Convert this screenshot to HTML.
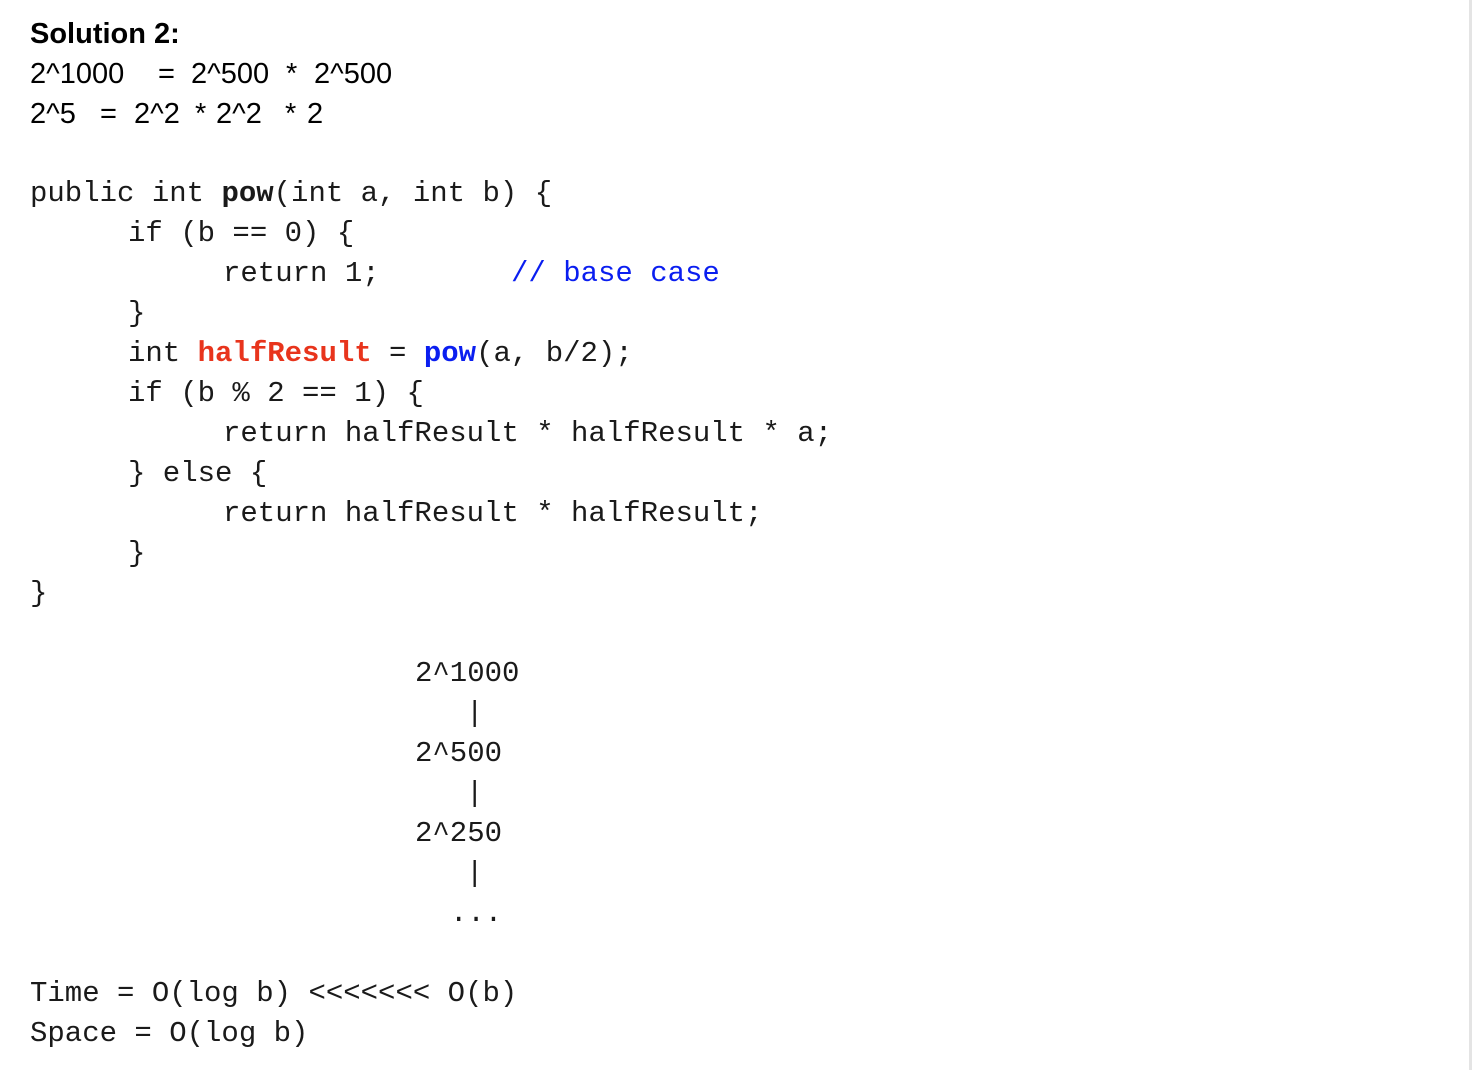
<!DOCTYPE html>
<html><head><meta charset="utf-8"><style>
html,body{margin:0;padding:0;background:#fff;width:1472px;height:1070px;overflow:hidden;position:relative}
.s{position:absolute;font-family:"Liberation Sans",Arial,sans-serif;font-size:29px;line-height:40px;color:#000;white-space:pre}
.m{position:absolute;font-family:"Liberation Mono",monospace;font-size:29px;line-height:40px;color:#1a1a1a;white-space:pre}
b{font-weight:bold}
.r{color:#e8341c;font-weight:bold}
.bl{color:#0a1ef0;font-weight:bold}
.c{color:#0a1ef0}
.edge{position:absolute;left:1469px;top:0;width:3px;height:1070px;background:#e4e4e4}
</style></head><body>
<div class="s" style="left:30px;top:14px;font-weight:bold">Solution 2:</div>
<div class="s" style="left:30px;top:54px">2^1000</div>
<div class="s" style="left:158px;top:54px">=</div>
<div class="s" style="left:191px;top:54px">2^500</div>
<div class="s" style="left:286px;top:54px">*</div>
<div class="s" style="left:314px;top:54px">2^500</div>
<div class="s" style="left:30px;top:94px">2^5</div>
<div class="s" style="left:100px;top:94px">=</div>
<div class="s" style="left:134px;top:94px">2^2</div>
<div class="s" style="left:195px;top:94px">*</div>
<div class="s" style="left:216px;top:94px">2^2</div>
<div class="s" style="left:285px;top:94px">*</div>
<div class="s" style="left:307px;top:94px">2</div>

<div class="m" style="left:30px;top:174px">public int <b>pow</b>(int a, int b) {</div>
<div class="m" style="left:128px;top:214px">if (b == 0) {</div>
<div class="m" style="left:223px;top:254px">return 1;</div>
<div class="m c" style="left:511px;top:254px">// base case</div>
<div class="m" style="left:128px;top:294px">}</div>
<div class="m" style="left:128px;top:334px">int <span class="r">halfResult</span> = <span class="bl">pow</span>(a, b/2);</div>
<div class="m" style="left:128px;top:374px">if (b % 2 == 1) {</div>
<div class="m" style="left:223px;top:414px">return halfResult * halfResult * a;</div>
<div class="m" style="left:128px;top:454px">} else {</div>
<div class="m" style="left:223px;top:494px">return halfResult * halfResult;</div>
<div class="m" style="left:128px;top:534px">}</div>
<div class="m" style="left:30px;top:574px">}</div>

<div class="m" style="left:415px;top:654px">2^1000</div>
<div class="m" style="left:466px;top:694px">|</div>
<div class="m" style="left:415px;top:734px">2^500</div>
<div class="m" style="left:466px;top:774px">|</div>
<div class="m" style="left:415px;top:814px">2^250</div>
<div class="m" style="left:466px;top:854px">|</div>
<div class="m" style="left:450px;top:894px">...</div>

<div class="m" style="left:30px;top:974px">Time = O(log b) &lt;&lt;&lt;&lt;&lt;&lt;&lt; O(b)</div>
<div class="m" style="left:30px;top:1014px">Space = O(log b)</div>
<div class="edge"></div>
</body></html>
